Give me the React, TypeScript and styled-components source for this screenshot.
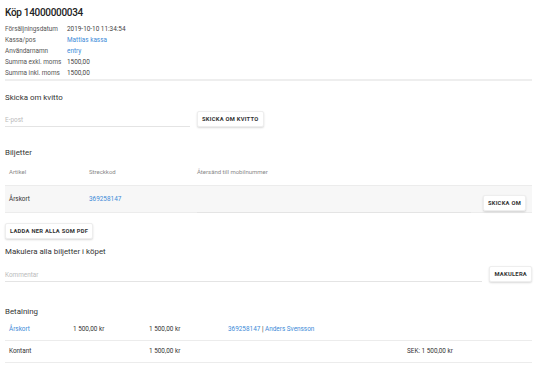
import React from "react";
import styled, { createGlobalStyle } from "styled-components";

const Global = createGlobalStyle`
  html, body { margin: 0; padding: 0; background: #fff; }
  body { font-family: Roboto, "Liberation Sans", sans-serif; color: #333; }
  * { box-sizing: border-box; }
`;

const Page = styled.div`
  width: 535px;
  height: 365px;
  overflow: hidden;
  padding: 5px 3px 0 5px;
`;

const Title = styled.h1`
  margin: 0 0 3px 0;
  font-size: 10px;
  font-weight: 500;
  letter-spacing: -0.3px;
  line-height: 16px;
  color: #222;
`;

const InfoGrid = styled.div`
  display: grid;
  grid-template-columns: 62px auto;
  grid-auto-rows: 10.8px;
  font-size: 6.4px;
  align-items: center;
`;

const Label = styled.span`
  color: #555;
`;

const Value = styled.span<{ $link?: boolean }>`
  color: ${(p) => (p.$link ? "#3d8bd8" : "#444")};
`;

const Divider = styled.div`
  height: 2px;
  background: #eee;
  margin: 1px 0 0 0;
`;

const SectionTitle = styled.h2<{ $mt: number }>`
  margin: ${(p) => p.$mt}px 0 0 0;
  font-size: 7.9px;
  font-weight: 400;
  line-height: 12px;
  color: #333;
`;

const FormRow = styled.div<{ $mt: number }>`
  display: flex;
  align-items: flex-end;
  gap: 7px;
  margin-top: ${(p) => p.$mt}px;
`;

const Field = styled.div<{ $w: number }>`
  width: ${(p) => p.$w}px;
  border-bottom: 1px solid #e4e4e4;
  height: 14px;
  font-size: 6.4px;
  color: #bbb;
  display: flex;
  align-items: center;
  padding-top: 2px;
`;

const Button = styled.button`
  font-family: Roboto, "Liberation Sans", sans-serif;
  background: #fff;
  border: 1px solid #eee;
  border-radius: 2px;
  box-shadow: 0 1px 2px rgba(0, 0, 0, 0.15);
  font-size: 5.8px;
  font-weight: 700;
  letter-spacing: 0.25px;
  color: #333;
  height: 16px;
  padding: 0 4px;
  white-space: nowrap;
  cursor: pointer;
`;

const Table = styled.div`
  margin-top: 0;
`;

const TRow = styled.div<{ $h: number; $bg?: boolean }>`
  display: grid;
  grid-template-columns: 80px 108px 1fr auto;
  align-items: center;
  height: ${(p) => p.$h}px;
  background: ${(p) => (p.$bg ? "#f7f7f7" : "transparent")};
  border-top: ${(p) => (p.$bg ? "1px solid #ececec" : "none")};
  border-bottom: ${(p) => (p.$bg ? "1px solid #ececec" : "none")};
  font-size: 6.4px;
  padding-left: 4px;
  padding-right: 6px;
`;

const HeadCell = styled.span`
  color: #8a8a8a;
  font-size: 6px;
`;

const Cell = styled.span<{ $link?: boolean }>`
  color: ${(p) => (p.$link ? "#3d8bd8" : "#333")};
`;

const Anchor = styled.span`
  color: #3d8bd8;
`;

const RowInput = styled.div`
  align-self: end;
  height: 100%;
  border-bottom: 1px solid #e4e4e4;
  margin-right: 12px;
  margin-bottom: -1px;
`;

const RowButton = styled(Button)`
  align-self: end;
  margin-bottom: 1px;
`;

const PdfRow = styled.div`
  display: flex;
  margin-top: 10px;
`;

const PayTable = styled.div`
  margin-top: 0;
`;

const PayRow = styled.div<{ $h: number }>`
  display: grid;
  grid-template-columns: 64px 76px 79px 179px auto;
  align-items: center;
  height: ${(p) => p.$h}px;
  border-bottom: 1px solid #ececec;
  font-size: 6.4px;
  padding-left: 4px;
`;

export default function App() {
  return (
    <>
      <Global />
      <Page>
        <Title>Köp 14000000034</Title>
        <InfoGrid>
          <Label>Försäljningsdatum</Label>
          <Value>2019-10-10 11:34:54</Value>
          <Label>Kassa/pos</Label>
          <Value $link>Mattias kassa</Value>
          <Label>Användarnamn</Label>
          <Value $link>entry</Value>
          <Label>Summa exkl. moms</Label>
          <Value>1500,00</Value>
          <Label>Summa inkl. moms</Label>
          <Value>1500,00</Value>
        </InfoGrid>
        <Divider />

        <SectionTitle $mt={11}>Skicka om kvitto</SectionTitle>
        <FormRow $mt={7}>
          <Field $w={185}>E-post</Field>
          <Button>SKICKA OM KVITTO</Button>
        </FormRow>

        <SectionTitle $mt={20}>Biljetter</SectionTitle>
        <Table>
          <TRow $h={26}>
            <HeadCell>Artikel</HeadCell>
            <HeadCell>Streckkod</HeadCell>
            <HeadCell>Återsänd till mobilnummer</HeadCell>
            <span />
          </TRow>
          <TRow $h={28} $bg>
            <Cell>Årskort</Cell>
            <Cell $link>369258147</Cell>
            <RowInput />
            <RowButton>SKICKA OM</RowButton>
          </TRow>
        </Table>
        <PdfRow>
          <Button>LADDA NER ALLA SOM PDF</Button>
        </PdfRow>

        <SectionTitle $mt={7}>Makulera alla biljetter i köpet</SectionTitle>
        <FormRow $mt={8}>
          <Field $w={478}>Kommentar</Field>
          <Button>MAKULERA</Button>
        </FormRow>

        <SectionTitle $mt={24}>Betalning</SectionTitle>
        <PayTable>
          <PayRow $h={23}>
            <Cell $link>Årskort</Cell>
            <Cell>1 500,00 kr</Cell>
            <Cell>1 500,00 kr</Cell>
            <Cell>
              <Anchor>369258147</Anchor> | <Anchor>Anders Svensson</Anchor>
            </Cell>
            <span />
          </PayRow>
          <PayRow $h={22}>
            <Cell>Kontant</Cell>
            <span />
            <Cell>1 500,00 kr</Cell>
            <span />
            <Cell>SEK: 1 500,00 kr</Cell>
          </PayRow>
        </PayTable>
      </Page>
    </>
  );
}
